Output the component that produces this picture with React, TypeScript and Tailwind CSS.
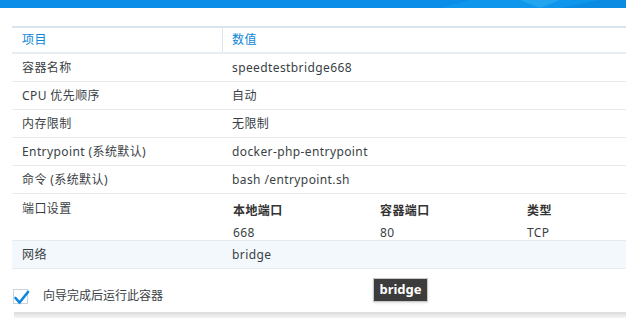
import React from "react";

const rows: [string, string][] = [
  ["容器名称", "speedtestbridge668"],
  ["CPU 优先顺序", "自动"],
  ["内存限制", "无限制"],
  ["Entrypoint (系统默认)", "docker-php-entrypoint"],
  ["命令 (系统默认)", "bash /entrypoint.sh"],
];

const font = { fontFamily: '"Noto Sans", "Noto Sans CJK SC", sans-serif' };

const TopBar = () => (
  <div className="relative h-2 w-full bg-[#0a8ce9] overflow-hidden">
    <svg className="absolute inset-0 h-full w-full" viewBox="0 0 626 8" preserveAspectRatio="none">
      <polygon points="440,8 470,0 626,0 626,8" fill="#0d96ec" />
      <polygon points="520,0 560,0 540,8" fill="#32aef2" opacity="0.6" />
      <polygon points="560,8 600,0 626,0 626,8" fill="#0b7fd9" opacity="0.5" />
    </svg>
  </div>
);

const Row = ({ label, value }: { label: string; value: string }) => (
  <div className="flex h-7 items-center border-b border-[#e6ebf0]">
    <div className="w-[211px] pl-[10px]">{label}</div>
    <div className="pl-[9px]">{value}</div>
  </div>
);

export default function App() {
  return (
    <div
      className="relative w-[626px] h-[318px] bg-white overflow-hidden text-[12px] tracking-[0.4px] text-[#3a3f45]"
      style={font}
    >
      <TopBar />
      <div className="ml-3 mt-[18px]">
        <div className="flex h-7 items-center border-t-2 border-b-2 border-t-[#d8e4ee] border-b-[#e8edf2] text-[#0b86d9]">
          <div className="w-[211px] pl-[10px] h-full flex items-center border-r border-[#dbe6ef]">项目</div>
          <div className="pl-[9px]">数值</div>
        </div>
        {rows.map(([l, v]) => (
          <Row key={l} label={l} value={v} />
        ))}
        <div className="flex h-[47px] border-b border-[#e6ebf0]">
          <div className="w-[211px] pl-[10px] pt-[6px]">端口设置</div>
          <div className="pl-[10px] pt-[8px] flex-1">
            <div className="grid grid-cols-[147px_147px_1fr] font-semibold text-[#333]">
              <div>本地端口</div>
              <div>容器端口</div>
              <div>类型</div>
            </div>
            <div className="grid grid-cols-[147px_147px_1fr] mt-[4px]">
              <div>668</div>
              <div>80</div>
              <div>TCP</div>
            </div>
          </div>
        </div>
        <div className="flex h-7 items-center border-b border-[#e6ebf0] bg-[#f3f8fc]">
          <div className="w-[211px] pl-[10px]">网络</div>
          <div className="pl-[9px]">bridge</div>
        </div>
        <div className="flex items-center mt-[18px] ml-[1px]">
          <div className="relative w-[15px] h-[15px] border border-[#c9d3dc] bg-white">
            <svg className="absolute -left-[1px] -top-[1px]" width="17" height="17" viewBox="0 0 17 17">
              <path d="M2.5 9 L6.5 13.5 L15 3" stroke="#0a86dd" strokeWidth="2.6" fill="none" strokeLinecap="round" />
            </svg>
          </div>
          <span className="ml-[15px] tracking-normal">向导完成后运行此容器</span>
        </div>
      </div>
      <div className="absolute left-[14px] right-0 top-[312px] h-[6px] bg-gradient-to-b from-[#dcdcdc] to-[#f4f4f4]" />
      <div className="absolute left-[373px] top-[278px] w-[55px] h-[24px] bg-[#3c3c3c] border border-[#c8c8c8] shadow flex items-center justify-center text-white font-bold text-[13px] tracking-normal">
        bridge
      </div>
    </div>
  );
}
